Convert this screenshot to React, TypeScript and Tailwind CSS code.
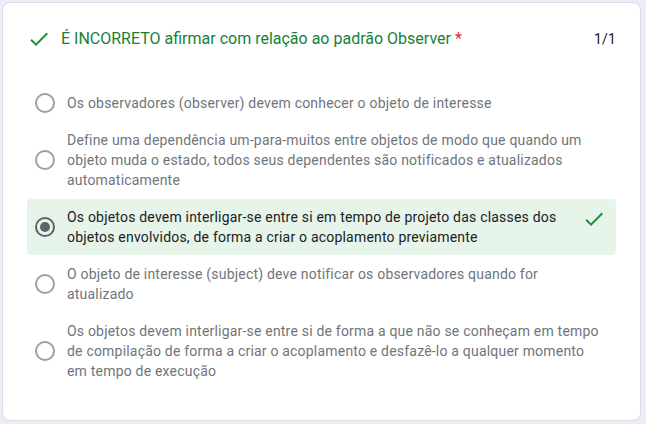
import React from "react";

const options = [
  "Os observadores (observer) devem conhecer o objeto de interesse",
  "Define uma dependência um-para-muitos entre objetos de modo que quando um objeto muda o estado, todos seus dependentes são notificados e atualizados automaticamente",
  "Os objetos devem interligar-se entre si em tempo de projeto das classes dos objetos envolvidos, de forma a criar o acoplamento previamente",
  "O objeto de interesse (subject) deve notificar os observadores quando for atualizado",
  "Os objetos devem interligar-se entre si de forma a que não se conheçam em tempo de compilação de forma a criar o acoplamento e desfazê-lo a qualquer momento em tempo de execução",
];

function Check({ className }: { className?: string }) {
  return (
    <svg viewBox="0 0 24 24" className={className} fill="currentColor">
      <path d="M9 16.17L4.83 12l-1.42 1.41L9 19 21 7l-1.41-1.41z" />
    </svg>
  );
}

export default function App() {
  return (
    <div
      className="w-[646px] h-[424px] bg-[#f0ebf8] p-[2px] pr-[5px] pb-[3px]"
      style={{ fontFamily: "Roboto, 'Liberation Sans', sans-serif" }}
    >
      <div className="h-full bg-white border border-[#dadce0] rounded-lg px-6 pt-6">
        <div className="flex items-center h-6">
          <Check className="w-6 h-6 text-[#1e8e3e] shrink-0" />
          <div className="ml-[10px] flex-1 text-[16px] leading-6 tracking-normal text-[#188038]">
            É INCORRETO afirmar com relação ao padrão Observer{" "}
            <span className="text-[#d93025]">*</span>
          </div>
          <div className="text-[14px] leading-6 tracking-[0.2px] text-[#202124]">1/1</div>
        </div>
        <div className="mt-[34px] flex flex-col gap-[1px]">
          {options.map((o, i) => {
            const sel = i === 2;
            return (
              <div
                key={i}
                className={
                  sel
                    ? "flex items-center py-2 pl-2 pr-[10px] rounded bg-[#e6f4ea]"
                    : "flex items-center py-2 pl-2 pr-[10px] rounded"
                }
              >
                {sel ? (
                  <div className="w-5 h-5 rounded-full border-2 border-[#5f6368] flex items-center justify-center shrink-0">
                    <div className="w-[10px] h-[10px] rounded-full bg-[#5f6368]" />
                  </div>
                ) : (
                  <div className="w-5 h-5 rounded-full border-2 border-[#9aa0a6] shrink-0" />
                )}
                <div
                  className={
                    sel
                      ? "ml-3 flex-1 text-[14px] leading-5 tracking-[0.2px] text-[#202124]"
                      : "ml-3 flex-1 text-[14px] leading-5 tracking-[0.2px] text-[#70757a]"
                  }
                >
                  {o}
                </div>
                {sel && <Check className="w-6 h-6 text-[#1e8e3e] shrink-0 self-start ml-2" />}
              </div>
            );
          })}
        </div>
      </div>
    </div>
  );
}
